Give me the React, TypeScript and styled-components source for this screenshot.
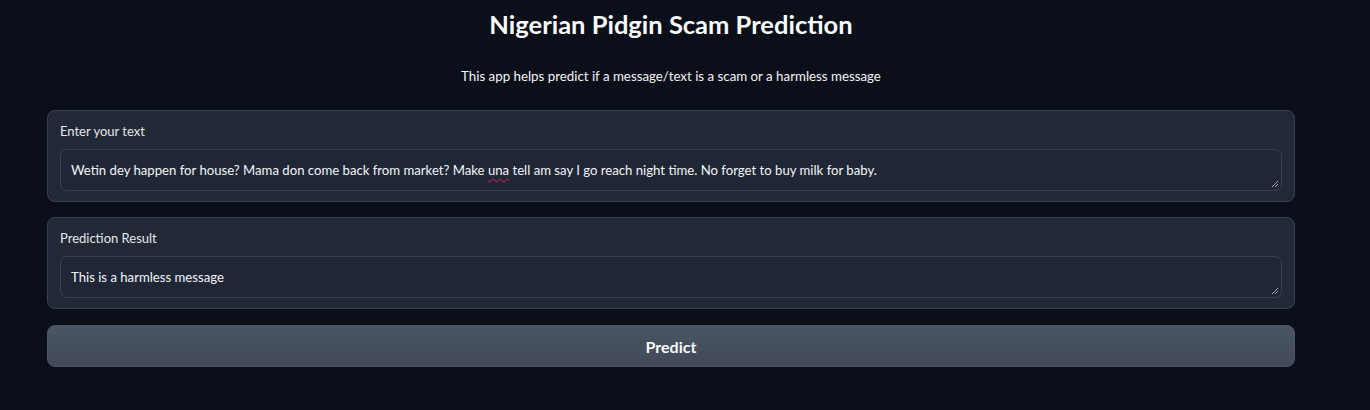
import React from "react";
import styled, { createGlobalStyle } from "styled-components";

const Global = createGlobalStyle`
  html, body { margin: 0; padding: 0; background: #0b0f19; }
  body { font-family: "Lato", "Noto Sans", sans-serif; color: #f3f4f6; }
  * { box-sizing: border-box; }
`;

const Page = styled.div`
  width: 1370px;
  height: 410px;
  padding: 0 75px 0 47px;
  display: flex;
  flex-direction: column;
  background: #0b0f19;
`;

const Title = styled.h1`
  margin: 9px 0 0;
  height: 30px;
  line-height: 30px;
  text-align: center;
  font-size: 25.5px;
  font-weight: 700;
  color: #f9fafb;
`;

const Subtitle = styled.p`
  margin: 27px 0 0;
  line-height: 20px;
  text-align: center;
  font-size: 13.3px;
  color: #f3f4f6;
`;

const Stack = styled.div`
  margin-top: 24px;
  display: flex;
  flex-direction: column;
  gap: 15px;
`;

const Block = styled.div`
  background: #212836;
  border: 1px solid #374151;
  border-radius: 8px;
  padding: 11px 12px 10px;
  height: 92px;
  display: flex;
  flex-direction: column;
`;

const Label = styled.div`
  font-size: 13px;
  line-height: 18px;
  color: #e5e7eb;
  margin-bottom: 9px;
`;

const Field = styled.div`
  position: relative;
  height: 42px;
  background: #1f2736;
  border: 1px solid #374151;
  border-radius: 7px;
  padding: 0 10px;
  display: flex;
  align-items: center;
  font-size: 13.15px;
  color: #f3f4f6;
  white-space: nowrap;
`;

const Misspelled = styled.span`
  text-decoration: underline wavy #e11d48;
  text-decoration-thickness: 1px;
  text-underline-offset: 3px;
`;

const Grip = styled.svg`
  position: absolute;
  right: 3px;
  bottom: 3px;
  width: 7px;
  height: 7px;
`;

const Button = styled.button`
  margin-top: 1px;
  height: 42px;
  border: 1px solid #4b5563;
  border-radius: 8px;
  background: linear-gradient(to bottom, #4b5563, #414957);
  color: #f9fafb;
  font-family: inherit;
  font-size: 16px;
  font-weight: 700;
  cursor: pointer;
`;

const ResizeGrip = () => (
  <Grip viewBox="0 0 7 7">
    <path d="M1 7 L7 1 M4 7 L7 4" stroke="#9ca3af" strokeWidth="1" />
  </Grip>
);

export default function App() {
  return (
    <>
      <Global />
      <Page>
        <Title>Nigerian Pidgin Scam Prediction</Title>
        <Subtitle>This app helps predict if a message/text is a scam or a harmless message</Subtitle>
        <Stack>
          <Block>
            <Label>Enter your text</Label>
            <Field>
              <span>
                Wetin dey happen for house? Mama don come back from market? Make <Misspelled>una</Misspelled> tell am say I go reach night time. No forget to buy milk for baby.
              </span>
              <ResizeGrip />
            </Field>
          </Block>
          <Block>
            <Label>Prediction Result</Label>
            <Field>
              <span>This is a harmless message</span>
              <ResizeGrip />
            </Field>
          </Block>
          <Button>Predict</Button>
        </Stack>
      </Page>
    </>
  );
}
